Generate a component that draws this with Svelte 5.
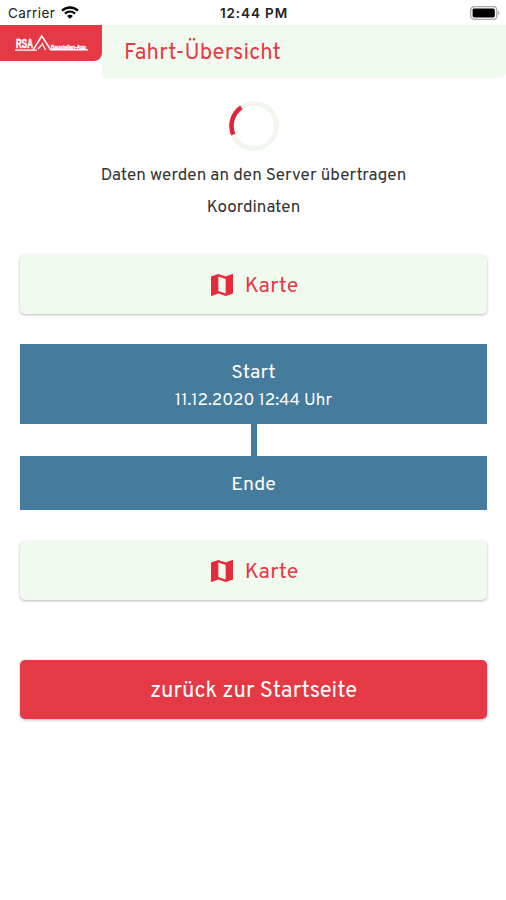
<script lang="ts">
  interface Stop {
    label: string;
    time?: string;
  }

  const title = 'Fahrt-Übersicht';
  const stops: Stop[] = [
    { label: 'Start', time: '11.12.2020 12:44 Uhr' },
    { label: 'Ende' },
  ];
</script>

{#snippet mapButton()}
  <button class="btn map" type="button">
    <svg class="map-icon" viewBox="3 3 18 18" aria-hidden="true">
      <path d="M20.5 3l-.16.03L15 5.1 9 3 3.36 4.9c-.21.07-.36.25-.36.48V20.5c0 .28.22.5.5.5l.16-.03L9 18.9l6 2.1 5.64-1.9c.21-.07.36-.25.36-.48V3.5c0-.28-.22-.5-.5-.5zM15 19l-6-2.11V5l6 2.11V19z" />
    </svg>
    <span>Karte</span>
  </button>
{/snippet}

<div class="screen">
  <div class="status">
    <div class="carrier">
      <span>Carrier</span>
      <svg class="wifi" viewBox="0 0 18 13" aria-hidden="true">
        <path d="M1 4.7C5.6.4 12.4.4 17 4.7" />
        <path d="M3.9 7.7c3-2.7 7.2-2.7 10.2 0" />
        <path class="dot" d="M9 12.8L6.1 9.9c1.7-1.5 4.1-1.5 5.8 0z" />
      </svg>
    </div>
    <span class="clock">12:44 PM</span>
    <svg class="battery" viewBox="0 0 30 14" aria-hidden="true">
      <rect class="case" x="0.7" y="0.7" width="26" height="12.6" rx="3.4" />
      <rect x="2.6" y="2.6" width="22.2" height="8.8" rx="1.6" />
      <path class="cap" d="M28 4.8c1.8.6 1.8 3.8 0 4.4z" />
    </svg>
  </div>

  <header>
    <div class="logo">
      <svg viewBox="0 0 74 20" aria-label="RSA">
        <text class="rsa" x="1" y="15" textLength="17" lengthAdjust="spacingAndGlyphs">RSA</text>
        <path class="roof" d="M18 17.2L26.7 3l9 13.7H73" />
        <path class="base" d="M0 17.2h22M27 10l3.5 7M23 16l3.5-4" />
        <text class="sub" x="36" y="15.5" textLength="35" lengthAdjust="spacingAndGlyphs">Baustellen-App</text>
      </svg>
    </div>
    <h1>{title}</h1>
  </header>

  <main>
    <div class="progress">
      <svg class="spinner" viewBox="0 0 50 50" aria-hidden="true">
        <circle cx="25" cy="25" r="22.5" />
        <path d="M12.3 6.4A22.5 22.5 0 0 0 4.2 33.6" />
      </svg>
      <p class="message">Daten werden an den Server übertragen</p>
      <p>Koordinaten</p>
    </div>

    {@render mapButton()}

    <div class="timeline">
      {#each stops as stop, i}
        {#if i > 0}
          <div class="link"></div>
        {/if}
        <div class="stop">
          <div class="label">{stop.label}</div>
          {#if stop.time}
            <div class="time">{stop.time}</div>
          {/if}
        </div>
      {/each}
    </div>

    {@render mapButton()}

    <button class="btn back" type="button"><span>zurück zur Startseite</span></button>
  </main>
</div>

<style>
  :global(body) { margin: 0; background: #fff; }
  .screen {
    width: 506px;
    height: 900px;
    overflow: hidden;
    background: #fff;
    font-family: Overpass, Roboto, sans-serif;
  }
  .status {
    display: grid;
    grid-template-columns: 1fr auto 1fr;
    align-items: center;
    height: 25px;
    padding: 0 6px 0 8px;
    box-sizing: border-box;
    font-family: Inter, sans-serif;
    color: #222;
  }
  .carrier {
    display: flex;
    align-items: center;
    gap: 6px;
    font-size: 13.5px;
    letter-spacing: 0.45px;
  }
  .wifi { width: 18px; height: 13px; fill: none; stroke: #000; stroke-width: 2.3; }
  .wifi .dot { fill: #000; stroke: none; }
  .clock { font-size: 13.5px; font-weight: 600; letter-spacing: 0.9px; }
  .battery { justify-self: end; width: 30px; height: 14px; }
  .battery .case { fill: none; stroke: #a9a9a9; stroke-width: 1.3; }
  .battery .cap { fill: #a9a9a9; }

  header { display: flex; align-items: flex-start; height: 53px; }
  .logo {
    width: 102px;
    height: 36px;
    flex: none;
    box-sizing: border-box;
    padding: 8px 0 0 15px;
    background: #e63946;
    border-bottom-right-radius: 8px;
  }
  .logo svg { display: block; width: 74px; height: 20px; overflow: visible; fill: #fff; }
  .rsa {
    font: bold 12px "Liberation Sans", sans-serif;
    stroke: #fff;
    stroke-width: 0.5;
  }
  .sub {
    font: bold 5px "Liberation Sans", sans-serif;
    stroke: #fff;
    stroke-width: 0.3;
  }
  .roof { fill: none; stroke: #fff; stroke-width: 1.5; }
  .base { fill: none; stroke: #fff; stroke-width: 1.3; }
  h1 {
    flex: 1;
    height: 53px;
    margin: 0;
    padding: 2px 0 0 22px;
    box-sizing: border-box;
    background: #f1faee;
    border-bottom-right-radius: 6px;
    color: #e63946;
    font-size: 22px;
    font-weight: 400;
    line-height: 53px;
    letter-spacing: 0.1px;
  }

  main { display: flex; flex-direction: column; padding: 0 19px 0 20px; }
  .progress {
    display: flex;
    flex-direction: column;
    align-items: center;
    height: 177px;
    padding-top: 23px;
    box-sizing: border-box;
    color: #333;
    font-size: 17px;
  }
  .spinner { width: 50px; height: 50px; fill: none; stroke: #f1f7ee; stroke-width: 5; }
  .spinner path { stroke: #e0253a; stroke-width: 4.5; }
  .progress p { margin: 0; line-height: 32px; }
  .progress .message { padding-top: 9px; letter-spacing: 0.05px; }

  .btn {
    display: flex;
    align-items: center;
    justify-content: center;
    height: 59px;
    padding: 0;
    border: 0;
    border-radius: 5px;
    box-shadow: 0 1px 3px rgba(0, 0, 0, 0.28);
    font: inherit;
    font-size: 22px;
  }
  .btn span { padding-top: 4px; }
  .map { gap: 12px; padding-left: 2px; background: #f1faee; color: #e63946; }
  .map span { padding-top: 3px; font-size: 21.5px; }
  .map-icon { width: 22px; height: 22px; fill: #e62c3c; }
  .timeline {
    display: flex;
    flex-direction: column;
    align-items: center;
    margin: 30px 0 31px;
  }
  .stop {
    width: 100%;
    padding: 16px 0 11px;
    background: #457b9d;
    color: #fff;
    text-align: center;
  }
  .label { font-size: 19.5px; line-height: 27px; }
  .time { padding-top: 3px; font-size: 17px; line-height: 23px; }
  .link { width: 6px; height: 32px; background: #457b9d; }
  .back { margin-top: 60px; background: #e63946; color: #fff; }
</style>
